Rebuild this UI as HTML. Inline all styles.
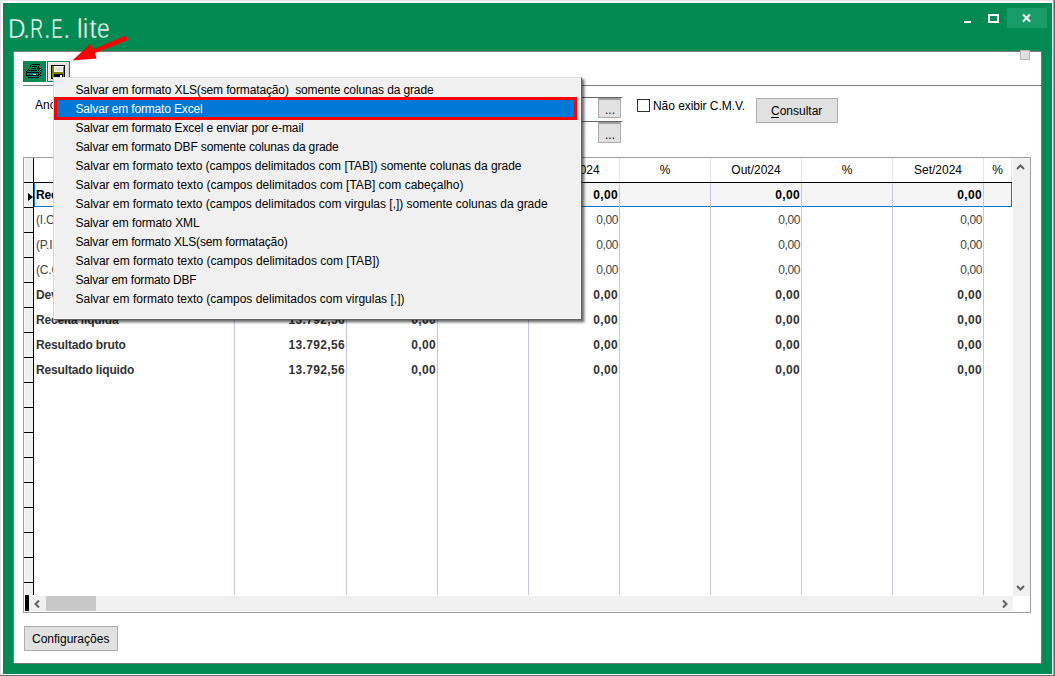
<!DOCTYPE html>
<html><head><meta charset="utf-8">
<style>
*{box-sizing:border-box;margin:0;padding:0}
html,body{width:1055px;height:676px;overflow:hidden;background:#fff;font-family:"Liberation Sans",sans-serif;font-size:12px;color:#000}
.a{position:absolute}
.t{white-space:pre;position:absolute;line-height:14px}
#frame{left:0;top:0;width:1055px;height:676px;background:#fff;border-top:1px solid #e3e3e3;border-left:1px solid #e3e3e3}
#rb1{left:1053px;top:0;width:1px;height:676px;background:#a0a0a0}
#rb2{left:1054px;top:0;width:1px;height:676px;background:#696969}
#bb{left:0;top:675px;width:1055px;height:1px;background:#696969}
#green{left:3px;top:3px;width:1049px;height:671px;background:#018a52}
#title{left:8px;top:13px;font-size:26px;line-height:30px;color:#fff;transform:scaleX(0.875);transform-origin:0 0;-webkit-text-stroke:0.45px #018a52}
#panel{left:13px;top:51px;width:1029px;height:613px;background:#fff;border:1px solid #7a7a7a}
.mi{left:75.5px;line-height:14px}
.gh{text-align:center;color:#000}
.gd{line-height:14px}
.btn{position:absolute;background:#e1e1e1;border:1px solid #adadad}
</style></head><body>
<div class="a" id="frame"></div>
<div class="a" id="rb1"></div><div class="a" id="rb2"></div><div class="a" id="bb"></div>
<div class="a" id="green"></div>
<svg class="a" style="left:0;top:0" width="130" height="50" viewBox="0 0 130 50"><g font-family="Liberation Sans" font-size="27" fill="#fff" stroke="#018a52" stroke-width="0.5"><text transform="translate(8.1,38) scale(0.9,1)">D</text><text transform="translate(22.7,38) scale(1,1)">.</text><text transform="translate(30.2,38) scale(0.66,1)">R</text><text transform="translate(43.4,38) scale(1,1)">.</text><text transform="translate(51.6,38) scale(0.62,1)">E</text><text transform="translate(63.1,38) scale(1,1)">.</text><text transform="translate(76.7,38) scale(1,1)">l</text><text transform="translate(82.4,38) scale(1,1)">i</text><text transform="translate(89.2,38) scale(1,1)">t</text><text transform="translate(97.1,38) scale(0.85,1)">e</text></g></svg>
<!-- window buttons -->
<div class="a" style="left:964px;top:21px;width:7px;height:2px;background:#fff"></div>
<div class="a" style="left:988px;top:14px;width:11px;height:9px;border:2px solid #fff"></div>
<div class="a" style="left:1007px;top:8px;width:40px;height:20px;background:#1a9c68"></div>
<svg class="a" style="left:1022px;top:13px" width="9" height="10" viewBox="0 0 9 10"><path d="M1 1.5L8 8.5M8 1.5L1 8.5" stroke="#fff" stroke-width="2"/></svg>
<div class="a" id="panel"></div>
<!-- small gray square top right of panel -->
<div class="a" style="left:1020px;top:50px;width:10px;height:10px;background:#e0e0e0;border:1px solid #b4b4b4"></div>

<!-- toolbar -->
<div class="a" style="left:23px;top:61px;width:23px;height:21px;background:#018a52"></div>
<svg class="a" style="left:23px;top:61px" width="23" height="21" viewBox="0 0 23 21" shape-rendering="crispEdges"><rect x="8" y="3" width="9" height="1" fill="#000"/><rect x="7" y="4" width="1" height="1" fill="#000"/><rect x="16" y="4" width="1" height="1" fill="#000"/><rect x="7" y="5" width="1" height="1" fill="#000"/><rect x="9" y="5" width="5" height="1" fill="#000"/><rect x="15" y="5" width="1" height="1" fill="#000"/><rect x="6" y="6" width="1" height="1" fill="#000"/><rect x="15" y="6" width="1" height="1" fill="#000"/><rect x="6" y="7" width="1" height="1" fill="#000"/><rect x="8" y="7" width="5" height="1" fill="#000"/><rect x="14" y="7" width="4" height="1" fill="#000"/><rect x="5" y="8" width="1" height="1" fill="#000"/><rect x="14" y="8" width="1" height="1" fill="#000"/><rect x="15" y="8" width="1" height="1" fill="#008080"/><rect x="16" y="8" width="1" height="1" fill="#000"/><rect x="17" y="8" width="1" height="1" fill="#008080"/><rect x="18" y="8" width="1" height="1" fill="#000"/><rect x="4" y="9" width="10" height="1" fill="#000"/><rect x="14" y="9" width="1" height="1" fill="#008080"/><rect x="15" y="9" width="1" height="1" fill="#000"/><rect x="16" y="9" width="1" height="1" fill="#008080"/><rect x="17" y="9" width="2" height="1" fill="#000"/><rect x="3" y="10" width="1" height="1" fill="#000"/><rect x="4" y="10" width="10" height="1" fill="#008080"/><rect x="14" y="10" width="1" height="1" fill="#000"/><rect x="15" y="10" width="1" height="1" fill="#008080"/><rect x="16" y="10" width="1" height="1" fill="#000"/><rect x="17" y="10" width="1" height="1" fill="#008080"/><rect x="18" y="10" width="1" height="1" fill="#000"/><rect x="3" y="11" width="13" height="1" fill="#000"/><rect x="16" y="11" width="1" height="1" fill="#008080"/><rect x="17" y="11" width="1" height="1" fill="#000"/><rect x="3" y="12" width="1" height="1" fill="#000"/><rect x="4" y="12" width="11" height="1" fill="#008080"/><rect x="15" y="12" width="1" height="1" fill="#000"/><rect x="16" y="12" width="1" height="1" fill="#008080"/><rect x="17" y="12" width="1" height="1" fill="#000"/><rect x="3" y="13" width="1" height="1" fill="#000"/><rect x="4" y="13" width="6" height="1" fill="#008080"/><rect x="10" y="13" width="3" height="1" fill="#ffff00"/><rect x="13" y="13" width="2" height="1" fill="#008080"/><rect x="15" y="13" width="2" height="1" fill="#000"/><rect x="3" y="14" width="13" height="1" fill="#000"/><rect x="16" y="14" width="1" height="1" fill="#008080"/><rect x="17" y="14" width="1" height="1" fill="#000"/><rect x="4" y="15" width="1" height="1" fill="#000"/><rect x="5" y="15" width="9" height="1" fill="#008080"/><rect x="14" y="15" width="1" height="1" fill="#000"/><rect x="15" y="15" width="1" height="1" fill="#008080"/><rect x="16" y="15" width="1" height="1" fill="#000"/><rect x="5" y="16" width="11" height="1" fill="#000"/></svg>
<div class="a" style="left:47px;top:61px;width:23px;height:21px;background:#e3e3e3;border:1px solid #018a52;box-shadow:inset 1px 1px 0 #f2eeee, inset -1px -1px 0 #d6d0d0"></div>
<svg class="a" style="left:51px;top:65px" width="14" height="14" viewBox="0 0 14 14" shape-rendering="crispEdges"><rect x="0" y="0" width="14" height="14" fill="#000"/><rect x="1" y="1" width="2" height="12" fill="#808000"/><rect x="12" y="2" width="1" height="11" fill="#808000"/><rect x="1" y="7" width="12" height="2" fill="#808000"/><rect x="3" y="1" width="9" height="6" fill="#fff"/><rect x="4" y="2" width="7" height="4" fill="#e0e0e0"/><rect x="12" y="1" width="1" height="1" fill="#fff"/><rect x="9" y="10" width="2" height="2" fill="#fff"/></svg>
<div class="a" style="left:23px;top:85px;width:1018px;height:1px;background:#7a7a7a"></div>
<div class="a" style="left:23px;top:86px;width:1018px;height:1px;background:#fff"></div>

<!-- filters -->
<div class="t" style="left:35px;top:98px">Ano</div>
<div class="a" style="left:330px;top:97px;width:292px;height:1px;background:#646464"></div>
<div class="a" style="left:330px;top:121px;width:292px;height:1px;background:#646464"></div>
<div class="btn" style="left:598px;top:98px;width:23px;height:20px;border-top:2px solid #a0a0a0"></div>
<div class="t" style="left:605px;top:103px">...</div>
<div class="btn" style="left:598px;top:122px;width:23px;height:21px;border-top:2px solid #a0a0a0"></div>
<div class="t" style="left:605px;top:128px">...</div>
<div class="a" style="left:637px;top:99px;width:13px;height:13px;border:1px solid #333;background:#fff"></div>
<div class="t" style="left:653px;top:99px;letter-spacing:-0.05px">Não exibir C.M.V.</div>
<div class="btn" style="left:756px;top:98px;width:82px;height:25px"></div>
<div class="t" style="left:771px;top:104px">Consultar</div>
<div class="a" style="left:771px;top:117px;width:8px;height:1px;background:#000"></div>

<!-- grid -->
<div class="a" style="left:23px;top:157px;width:1008px;height:456px;border:1px solid #a0a0a0;background:#fff"></div>
<div class="a" style="left:24px;top:158px;width:9px;height:437px;background:#f0f0f0;border-left:1px solid #fafafa"></div>
<div class="t gh" style="left:347px;width:90px;top:163px">Dez/2024</div>
<div class="t gh" style="left:438px;width:90px;top:163px">%</div>
<div class="t gh" style="left:529px;width:90px;top:163px">Nov/2024</div>
<div class="t gh" style="left:620px;width:90px;top:163px">%</div>
<div class="t gh" style="left:711px;width:90px;top:163px">Out/2024</div>
<div class="t gh" style="left:802px;width:90px;top:163px">%</div>
<div class="t gh" style="left:893px;width:90px;top:163px">Set/2024</div>
<div class="t gh" style="left:984px;width:27px;top:163px">%</div>
<div class="a" style="left:234px;top:158px;width:1px;height:24px;background:#e3e3e3"></div>
<div class="a" style="left:346px;top:158px;width:1px;height:24px;background:#e3e3e3"></div>
<div class="a" style="left:437px;top:158px;width:1px;height:24px;background:#e3e3e3"></div>
<div class="a" style="left:528px;top:158px;width:1px;height:24px;background:#e3e3e3"></div>
<div class="a" style="left:619px;top:158px;width:1px;height:24px;background:#e3e3e3"></div>
<div class="a" style="left:710px;top:158px;width:1px;height:24px;background:#e3e3e3"></div>
<div class="a" style="left:801px;top:158px;width:1px;height:24px;background:#e3e3e3"></div>
<div class="a" style="left:892px;top:158px;width:1px;height:24px;background:#e3e3e3"></div>
<div class="a" style="left:983px;top:158px;width:1px;height:24px;background:#e3e3e3"></div>
<div class="a" style="left:1011px;top:158px;width:1px;height:24px;background:#e3e3e3"></div>
<div class="a" style="left:24px;top:182px;width:988px;height:1px;background:#000"></div>
<div class="a" style="left:33px;top:158px;width:1px;height:437px;background:#000"></div>
<div class="a" style="left:24px;top:182px;width:9px;height:1px;background:#000"></div>
<div class="a" style="left:24px;top:207px;width:9px;height:1px;background:#000"></div>
<div class="a" style="left:24px;top:232px;width:9px;height:1px;background:#000"></div>
<div class="a" style="left:24px;top:257px;width:9px;height:1px;background:#000"></div>
<div class="a" style="left:24px;top:282px;width:9px;height:1px;background:#000"></div>
<div class="a" style="left:24px;top:307px;width:9px;height:1px;background:#000"></div>
<div class="a" style="left:24px;top:332px;width:9px;height:1px;background:#000"></div>
<div class="a" style="left:24px;top:357px;width:9px;height:1px;background:#000"></div>
<div class="a" style="left:24px;top:382px;width:9px;height:1px;background:#000"></div>
<div class="a" style="left:24px;top:407px;width:9px;height:1px;background:#000"></div>
<div class="a" style="left:24px;top:432px;width:9px;height:1px;background:#000"></div>
<div class="a" style="left:24px;top:457px;width:9px;height:1px;background:#000"></div>
<div class="a" style="left:24px;top:482px;width:9px;height:1px;background:#000"></div>
<div class="a" style="left:24px;top:507px;width:9px;height:1px;background:#000"></div>
<div class="a" style="left:24px;top:532px;width:9px;height:1px;background:#000"></div>
<div class="a" style="left:24px;top:557px;width:9px;height:1px;background:#000"></div>
<div class="a" style="left:24px;top:582px;width:9px;height:1px;background:#000"></div>
<div class="a" style="left:34px;top:183px;width:978px;height:24px;background:#f5f5f5;border-left:1px solid #0078d7;border-right:1px solid #0078d7;border-bottom:1px solid #0078d7"></div>
<div class="a" style="left:234px;top:183px;width:1px;height:412px;background:#cbc5e4"></div>
<div class="a" style="left:346px;top:183px;width:1px;height:412px;background:#cbc5e4"></div>
<div class="a" style="left:437px;top:183px;width:1px;height:412px;background:#cbc5e4"></div>
<div class="a" style="left:528px;top:183px;width:1px;height:412px;background:#cbc5e4"></div>
<div class="a" style="left:619px;top:183px;width:1px;height:412px;background:#cbc5e4"></div>
<div class="a" style="left:710px;top:183px;width:1px;height:412px;background:#cbc5e4"></div>
<div class="a" style="left:801px;top:183px;width:1px;height:412px;background:#cbc5e4"></div>
<div class="a" style="left:892px;top:183px;width:1px;height:412px;background:#cbc5e4"></div>
<div class="a" style="left:983px;top:183px;width:1px;height:412px;background:#cbc5e4"></div>
<svg class="a" style="left:28px;top:193px" width="5" height="8" viewBox="0 0 5 8"><path d="M0 0L5 4L0 8Z" fill="#000"/></svg>
<div class="t gd" style="left:36px;top:188px;font-weight:bold;color:#000;letter-spacing:-0.15px">Receita bruta</div>
<div class="t gd" style="left:234px;width:111px;text-align:right;top:188px;font-weight:bold;color:#000;letter-spacing:0.35px">13.792,56</div>
<div class="t gd" style="left:346px;width:90px;text-align:right;top:188px;font-weight:bold;color:#000;letter-spacing:0.35px">0,00</div>
<div class="t gd" style="left:528px;width:90px;text-align:right;top:188px;font-weight:bold;color:#000;letter-spacing:0.35px">0,00</div>
<div class="t gd" style="left:710px;width:90px;text-align:right;top:188px;font-weight:bold;color:#000;letter-spacing:0.35px">0,00</div>
<div class="t gd" style="left:892px;width:90px;text-align:right;top:188px;font-weight:bold;color:#000;letter-spacing:0.35px">0,00</div>
<div class="t gd" style="left:36px;top:213px;font-weight:normal;color:#444;letter-spacing:-0.2px">(I.C.M.S.)</div>
<div class="t gd" style="left:234px;width:111px;text-align:right;top:213px;font-weight:normal;color:#444;letter-spacing:-0.4px">0,00</div>
<div class="t gd" style="left:346px;width:90px;text-align:right;top:213px;font-weight:normal;color:#444;letter-spacing:-0.4px">0,00</div>
<div class="t gd" style="left:528px;width:90px;text-align:right;top:213px;font-weight:normal;color:#444;letter-spacing:-0.4px">0,00</div>
<div class="t gd" style="left:710px;width:90px;text-align:right;top:213px;font-weight:normal;color:#444;letter-spacing:-0.4px">0,00</div>
<div class="t gd" style="left:892px;width:90px;text-align:right;top:213px;font-weight:normal;color:#444;letter-spacing:-0.4px">0,00</div>
<div class="t gd" style="left:36px;top:238px;font-weight:normal;color:#444;letter-spacing:-0.2px">(P.I.S.)</div>
<div class="t gd" style="left:234px;width:111px;text-align:right;top:238px;font-weight:normal;color:#444;letter-spacing:-0.4px">0,00</div>
<div class="t gd" style="left:346px;width:90px;text-align:right;top:238px;font-weight:normal;color:#444;letter-spacing:-0.4px">0,00</div>
<div class="t gd" style="left:528px;width:90px;text-align:right;top:238px;font-weight:normal;color:#444;letter-spacing:-0.4px">0,00</div>
<div class="t gd" style="left:710px;width:90px;text-align:right;top:238px;font-weight:normal;color:#444;letter-spacing:-0.4px">0,00</div>
<div class="t gd" style="left:892px;width:90px;text-align:right;top:238px;font-weight:normal;color:#444;letter-spacing:-0.4px">0,00</div>
<div class="t gd" style="left:36px;top:263px;font-weight:normal;color:#444;letter-spacing:-0.2px">(C.O.F.I.N.S.)</div>
<div class="t gd" style="left:234px;width:111px;text-align:right;top:263px;font-weight:normal;color:#444;letter-spacing:-0.4px">0,00</div>
<div class="t gd" style="left:346px;width:90px;text-align:right;top:263px;font-weight:normal;color:#444;letter-spacing:-0.4px">0,00</div>
<div class="t gd" style="left:528px;width:90px;text-align:right;top:263px;font-weight:normal;color:#444;letter-spacing:-0.4px">0,00</div>
<div class="t gd" style="left:710px;width:90px;text-align:right;top:263px;font-weight:normal;color:#444;letter-spacing:-0.4px">0,00</div>
<div class="t gd" style="left:892px;width:90px;text-align:right;top:263px;font-weight:normal;color:#444;letter-spacing:-0.4px">0,00</div>
<div class="t gd" style="left:36px;top:288px;font-weight:bold;color:#333;letter-spacing:-0.15px">Devoluções</div>
<div class="t gd" style="left:234px;width:111px;text-align:right;top:288px;font-weight:bold;color:#333;letter-spacing:0.35px">0,00</div>
<div class="t gd" style="left:346px;width:90px;text-align:right;top:288px;font-weight:bold;color:#333;letter-spacing:0.35px">0,00</div>
<div class="t gd" style="left:528px;width:90px;text-align:right;top:288px;font-weight:bold;color:#333;letter-spacing:0.35px">0,00</div>
<div class="t gd" style="left:710px;width:90px;text-align:right;top:288px;font-weight:bold;color:#333;letter-spacing:0.35px">0,00</div>
<div class="t gd" style="left:892px;width:90px;text-align:right;top:288px;font-weight:bold;color:#333;letter-spacing:0.35px">0,00</div>
<div class="t gd" style="left:36px;top:313px;font-weight:bold;color:#333;letter-spacing:-0.15px">Receita liquida</div>
<div class="t gd" style="left:234px;width:111px;text-align:right;top:313px;font-weight:bold;color:#333;letter-spacing:0.35px">13.792,56</div>
<div class="t gd" style="left:346px;width:90px;text-align:right;top:313px;font-weight:bold;color:#333;letter-spacing:0.35px">0,00</div>
<div class="t gd" style="left:528px;width:90px;text-align:right;top:313px;font-weight:bold;color:#333;letter-spacing:0.35px">0,00</div>
<div class="t gd" style="left:710px;width:90px;text-align:right;top:313px;font-weight:bold;color:#333;letter-spacing:0.35px">0,00</div>
<div class="t gd" style="left:892px;width:90px;text-align:right;top:313px;font-weight:bold;color:#333;letter-spacing:0.35px">0,00</div>
<div class="t gd" style="left:36px;top:338px;font-weight:bold;color:#333;letter-spacing:-0.15px">Resultado bruto</div>
<div class="t gd" style="left:234px;width:111px;text-align:right;top:338px;font-weight:bold;color:#333;letter-spacing:0.35px">13.792,56</div>
<div class="t gd" style="left:346px;width:90px;text-align:right;top:338px;font-weight:bold;color:#333;letter-spacing:0.35px">0,00</div>
<div class="t gd" style="left:528px;width:90px;text-align:right;top:338px;font-weight:bold;color:#333;letter-spacing:0.35px">0,00</div>
<div class="t gd" style="left:710px;width:90px;text-align:right;top:338px;font-weight:bold;color:#333;letter-spacing:0.35px">0,00</div>
<div class="t gd" style="left:892px;width:90px;text-align:right;top:338px;font-weight:bold;color:#333;letter-spacing:0.35px">0,00</div>
<div class="t gd" style="left:36px;top:363px;font-weight:bold;color:#333;letter-spacing:-0.15px">Resultado liquido</div>
<div class="t gd" style="left:234px;width:111px;text-align:right;top:363px;font-weight:bold;color:#333;letter-spacing:0.35px">13.792,56</div>
<div class="t gd" style="left:346px;width:90px;text-align:right;top:363px;font-weight:bold;color:#333;letter-spacing:0.35px">0,00</div>
<div class="t gd" style="left:528px;width:90px;text-align:right;top:363px;font-weight:bold;color:#333;letter-spacing:0.35px">0,00</div>
<div class="t gd" style="left:710px;width:90px;text-align:right;top:363px;font-weight:bold;color:#333;letter-spacing:0.35px">0,00</div>
<div class="t gd" style="left:892px;width:90px;text-align:right;top:363px;font-weight:bold;color:#333;letter-spacing:0.35px">0,00</div>
<!-- vertical scrollbar -->
<div class="a" style="left:1013px;top:158px;width:17px;height:438px;background:#f0f0f0"></div>
<svg class="a" style="left:1016px;top:164px" width="9" height="6" viewBox="0 0 9 6"><path d="M1 5L4.5 1.5L8 5" stroke="#606060" stroke-width="2" fill="none"/></svg>
<svg class="a" style="left:1016px;top:585px" width="9" height="6" viewBox="0 0 9 6"><path d="M1 1L4.5 4.5L8 1" stroke="#606060" stroke-width="2" fill="none"/></svg>
<!-- horizontal scrollbar -->
<div class="a" style="left:29px;top:596px;width:984px;height:15px;background:#f0f0f0"></div>
<div class="a" style="left:25px;top:595px;width:4px;height:16px;background:#000"></div>
<div class="a" style="left:46px;top:596px;width:50px;height:15px;background:#c8c8c8"></div>
<svg class="a" style="left:34px;top:600px" width="6" height="8" viewBox="0 0 6 8"><path d="M5 0.5L1.5 4L5 7.5" stroke="#606060" stroke-width="2" fill="none"/></svg>
<svg class="a" style="left:1002px;top:600px" width="6" height="8" viewBox="0 0 6 8"><path d="M1 0.5L4.5 4L1 7.5" stroke="#606060" stroke-width="2" fill="none"/></svg>
<div class="a" style="left:1013px;top:596px;width:17px;height:16px;background:#fff"></div>

<!-- bottom button -->
<div class="btn" style="left:24px;top:626px;width:94px;height:25px"></div>
<div class="t" style="left:32px;top:632px">Configurações</div>

<!-- popup menu -->
<div class="a" style="left:53px;top:77px;width:529px;height:243px;background:#f0f0f0;border-top:1px solid #dedede;border-left:1px solid #d4d4d4;border-right:1px solid #606060;border-bottom:1px solid #606060;box-shadow:inset -1px -1px 0 #f7f7f7, inset 1px 1px 0 #f7f7f7, 2px 2px 2px rgba(0,0,0,0.45), 3px 3px 3px rgba(0,0,0,0.2)"></div>
<div class="a" style="left:54px;top:97px;width:523px;height:23px;border:3px solid #ff0000;background:#0078d7"></div>
<div class="t mi" style="top:83px;letter-spacing:-0.13px;color:#000">Salvar em formato XLS(sem formatação)  somente colunas da grade</div>
<div class="t mi" style="top:102px;letter-spacing:-0.161px;color:#fff">Salvar em formato Excel</div>
<div class="t mi" style="top:121px;letter-spacing:-0.126px;color:#000">Salvar em formato Excel e enviar por e-mail</div>
<div class="t mi" style="top:140px;letter-spacing:-0.154px;color:#000">Salvar em formato DBF somente colunas da grade</div>
<div class="t mi" style="top:159px;letter-spacing:-0.025px;color:#000">Salvar em formato texto (campos delimitados com [TAB]) somente colunas da grade</div>
<div class="t mi" style="top:178px;letter-spacing:0.01px;color:#000">Salvar em formato texto (campos delimitados com [TAB] com cabeçalho)</div>
<div class="t mi" style="top:197px;letter-spacing:-0.017px;color:#000">Salvar em formato texto (campos delimitados com virgulas [,]) somente colunas da grade</div>
<div class="t mi" style="top:216px;letter-spacing:-0.095px;color:#000">Salvar em formato XML</div>
<div class="t mi" style="top:235px;letter-spacing:-0.165px;color:#000">Salvar em formato XLS(sem formatação)</div>
<div class="t mi" style="top:254px;letter-spacing:0.015px;color:#000">Salvar em formato texto (campos delimitados com [TAB])</div>
<div class="t mi" style="top:273px;letter-spacing:-0.21px;color:#000">Salvar em formato DBF</div>
<div class="t mi" style="top:292px;letter-spacing:0.003px;color:#000">Salvar em formato texto (campos delimitados com virgulas [,])</div>

<!-- red arrow -->
<svg class="a" style="left:0;top:0" width="140" height="80" viewBox="0 0 140 80">
<path d="M72.5 60.5L90 44L93 49.3L125.5 35.5L127.5 40L95 53L96.5 58.5Z" fill="#ff0000"/>
</svg>
</body></html>
